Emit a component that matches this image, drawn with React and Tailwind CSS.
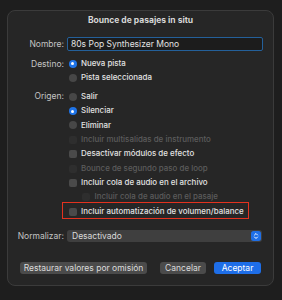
import React from 'react';

const Radio = ({ on }) =>
  on ? (
    <span className="flex h-[8px] w-[8px] items-center justify-center rounded-full bg-[#1f74e8]">
      <span className="h-[3px] w-[3px] rounded-full bg-white" />
    </span>
  ) : (
    <span className="h-[8px] w-[8px] rounded-full bg-[#474747]" />
  );

const Check = ({ disabled }) => (
  <span
    className={`h-[8px] w-[8px] rounded-[2px] ${disabled ? 'bg-[#2e2e2e]' : 'bg-[#4a4a4a]'}`}
  />
);

const Row = ({ label, children, h = 'h-[14.4px]' }) => (
  <div className={`flex items-center ${h}`}>
    <div className="w-[56px] shrink-0 text-right text-[#c4c4c4]">{label}</div>
    <div className="ml-[3px] flex flex-1 items-center">{children}</div>
  </div>
);

const Option = ({ icon, text, disabled, indent }) => (
  <div className={`flex items-center gap-[4.5px] ${indent ? 'pl-[15px]' : 'pl-[1.5px]'}`}>
    {icon}
    <span className={`text-[7.95px] font-medium ${disabled ? 'text-[#5c5c5c]' : 'text-[#e2e2e2]'}`}>{text}</span>
  </div>
);

export default function App() {
  return (
    <div
      className="h-[300px] w-[282px] bg-[#1e1e1e] pl-[7px] pt-[10px] text-[8.5px]"
      style={{ fontFamily: 'Inter, "Liberation Sans", sans-serif' }}
    >
      <div className="h-[276px] w-[267px] rounded-[8px] border border-[#3b3b3b] bg-[#262626]">
        {/* title */}
        <div className="mt-[2px] flex h-[14px] items-center justify-center font-bold text-[#d6d6d6]">
          Bounce de pasajes in situ
        </div>

        <div className="mt-[10px]">
          <Row label="Nombre:" h="h-[14px]">
            <div className="flex h-[14px] w-[196px] items-center rounded-[2px] border-[1.5px] border-[#24609a] bg-[#1c1c1c] px-[3px] text-[#e2e2e2]">
              80s Pop Synthesizer Mono
            </div>
          </Row>
        </div>

        <div className="mt-[6px]">
          <Row label="Destino:" h="h-[14px]">
            <Option icon={<Radio on />} text="Nueva pista" />
          </Row>
          <Row h="h-[14px]">
            <Option icon={<Radio />} text="Pista seleccionada" />
          </Row>
        </div>

        <div className="mt-[4.5px]">
          <Row label="Origen:">
            <Option icon={<Radio />} text="Salir" />
          </Row>
          <Row>
            <Option icon={<Radio on />} text="Silenciar" />
          </Row>
          <Row>
            <Option icon={<Radio />} text="Eliminar" />
          </Row>
          <Row>
            <Option icon={<Check disabled />} text="Incluir multisalidas de instrumento" disabled />
          </Row>
          <Row>
            <Option icon={<Check />} text="Desactivar módulos de efecto" />
          </Row>
          <Row>
            <Option icon={<Check disabled />} text="Bounce de segundo paso de loop" disabled />
          </Row>
          <Row>
            <Option icon={<Check />} text="Incluir cola de audio en el archivo" />
          </Row>
          <Row>
            <Option icon={<Check disabled />} text="Incluir cola de audio en el pasaje" disabled indent />
          </Row>
          <Row>
            <div className="relative">
              <Option icon={<Check />} text="Incluir automatización de volumen/balance" />
              <span className="absolute left-[-5px] top-[-3.5px] h-[17px] w-[187px] border-[1.5px] border-[#e3321f]" />
            </div>
          </Row>
        </div>

        <div className="mt-[11px]">
          <Row label="Normalizar:" h="h-[12px]">
            <div className="flex h-[12px] w-[195px] items-center justify-between rounded-[3px] bg-[#3f3f3f] pl-[5px] pr-[1px] text-[#dadada]">
              <span>Desactivado</span>
              <span className="flex h-[10px] w-[10px] items-center justify-center rounded-[2.5px] bg-[#1f6fe6]">
                <svg width="6" height="8" viewBox="0 0 6 8" fill="none" stroke="white" strokeWidth="1" strokeLinecap="round" strokeLinejoin="round">
                  <path d="M1.5 3L3 1.5L4.5 3" />
                  <path d="M1.5 5L3 6.5L4.5 5" />
                </svg>
              </span>
            </div>
          </Row>
        </div>

        <div className="mt-[20px] flex items-center pl-[12px] pr-[12px]">
          <button className="flex h-[12px] w-[127px] items-center justify-center rounded-[3px] bg-[#4b4b4b] text-[#dcdcdc]">
            Restaurar valores por omisión
          </button>
          <button className="ml-auto flex h-[12px] w-[46px] items-center justify-center rounded-[3px] bg-[#4b4b4b] text-[#dcdcdc]">
            Cancelar
          </button>
          <button className="ml-[8px] flex h-[12px] w-[47px] items-center justify-center rounded-[3px] bg-[#1e6ee8] text-white">
            Aceptar
          </button>
        </div>
      </div>
    </div>
  );
}
